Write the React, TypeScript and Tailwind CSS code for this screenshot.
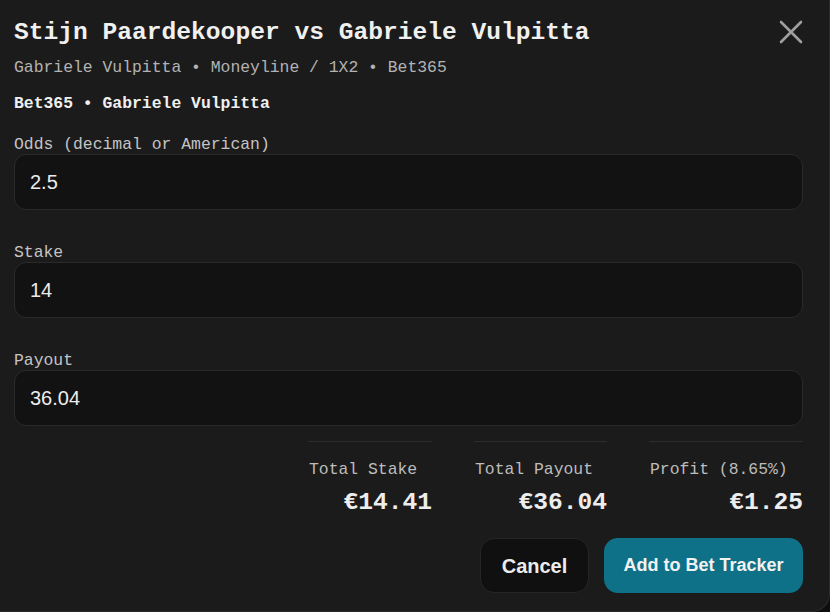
import React from "react";

const mono = { fontFamily: '"Liberation Mono", "DejaVu Sans Mono", monospace' };
const sans = { fontFamily: '"Liberation Sans", Arial, sans-serif' };

function Field({ label, value }: { label: string; value: string }) {
  return (
    <div className="flex flex-col">
      <div className="text-[16.4px] leading-[20px] text-[#c4c4c4]" style={mono}>
        {label}
      </div>
      <div className="-mt-[1px] h-[56px] rounded-[12px] border border-[#2a2a2a] bg-[#121212] flex items-center pl-[15px]">
        <span className="text-[20px] text-[#ececec]" style={sans}>
          {value}
        </span>
      </div>
    </div>
  );
}

function Stat({ label, value, w }: { label: string; value: string; w: string }) {
  return (
    <div className={`${w} border-t border-[#2c2c2c] flex flex-col`}>
      <div className="mt-[18px] text-[16.4px] leading-[20px] text-[#bdbdbd] pl-[1px]" style={mono}>
        {label}
      </div>
      <div className="mt-[8px] text-right text-[24.6px] leading-[30px] font-bold text-[#ededed]" style={mono}>
        {value}
      </div>
    </div>
  );
}

export default function App() {
  return (
    <div className="w-[830px] h-[612px] bg-[#0e0e0e] overflow-hidden">
      <div className="w-full h-full bg-[#1b1b1b] border-r border-b border-[#2b2b2b] rounded-br-[18px] pl-[14px] pr-[26px] pt-[17px] flex flex-col relative">
        <button className="absolute right-[26px] top-[20px] w-[24px] h-[24px] text-[#a0a0a0]">
          <svg viewBox="0 0 24 24" width="24" height="24" fill="none" stroke="currentColor" strokeWidth="2.6" strokeLinecap="round">
            <path d="M2 2 L22 22 M22 2 L2 22" />
          </svg>
        </button>
        <div className="text-[24.6px] leading-[32px] font-bold text-[#f0f0f0]" style={mono}>
          Stijn Paardekooper vs Gabriele Vulpitta
        </div>
        <div className="mt-[7px] text-[16.4px] leading-[24px] text-[#b3b3b3]" style={mono}>
          Gabriele Vulpitta • Moneyline / 1X2 • Bet365
        </div>
        <div className="mt-[12px] text-[16.4px] leading-[24px] font-bold text-[#f0f0f0]" style={mono}>
          Bet365 • Gabriele Vulpitta
        </div>
        <div className="mt-[19px] flex flex-col gap-[33px]">
          <Field label="Odds (decimal or American)" value="2.5" />
          <Field label="Stake" value="14" />
          <Field label="Payout" value="36.04" />
        </div>
        <div className="mt-[15px] flex justify-end gap-[42px]">
          <Stat label="Total Stake" value="€14.41" w="w-[124px]" />
          <Stat label="Total Payout" value="€36.04" w="w-[133px]" />
          <Stat label="Profit (8.65%)" value="€1.25" w="w-[154px]" />
        </div>
        <div className="mt-[20px] flex justify-end gap-[15px]">
          <button className="w-[109px] h-[55px] rounded-[14px] bg-[#101010] border border-[#262626] text-[20px] font-bold text-[#ececec]" style={sans}>
            Cancel
          </button>
          <button className="w-[199px] h-[55px] rounded-[14px] bg-[#0e7187] text-[18px] font-bold text-[#f2f2f2]" style={sans}>
            Add to Bet Tracker
          </button>
        </div>
      </div>
    </div>
  );
}
